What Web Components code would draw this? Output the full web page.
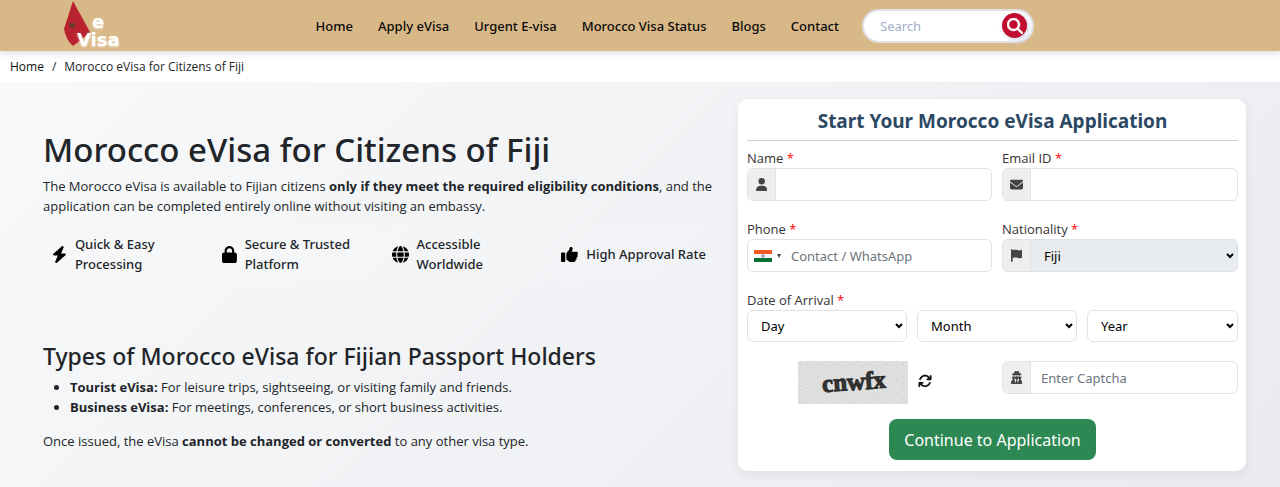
<!DOCTYPE html>
<html lang="en">
<head>
<meta charset="utf-8">
<title>Morocco eVisa for Citizens of Fiji</title>
<style>
  body { margin: 0; font: 13px/20px "Noto Sans", "Open Sans", sans-serif; color: #212529; background: #fff; }
</style>
</head>
<body>
<visa-header></visa-header>
<crumb-trail>Morocco eVisa for Citizens of Fiji</crumb-trail>
<visa-hero>
  <visa-intro></visa-intro>
  <apply-form slot="aside"></apply-form>
</visa-hero>

<script>
const define = (name, html, setup) => {
  const tpl = document.createElement('template');
  tpl.innerHTML = html;
  customElements.define(name, class extends HTMLElement {
    constructor() {
      super();
      this.attachShadow({ mode: 'open' }).append(tpl.content.cloneNode(true));
    }
    connectedCallback() { if (setup) setup(this, this.shadowRoot); }
  });
};

const ICONS = {
  search: ['0 0 512 512', '<path stroke="currentColor" stroke-width="14" d="M416 208c0 45.900-14.900 88.300-40 122.700L502.600 457.400c12.500 12.500 12.500 32.800 0 45.300s-32.800 12.500-45.300 0L330.700 376c-34.400 25.200-76.800 40-122.700 40C93.100 416 0 322.900 0 208S93.100 0 208 0S416 93.100 416 208zM208 352a144 144 0 1 0 0-288 144 144 0 1 0 0 288z"/>'],
  bolt: ['0 0 448 512', '<path d="M349.400 44.600c5.900-13.700 1.500-29.700-10.600-38.500s-28.600-8-39.900 1.800l-256 224c-10 8.800-13.600 22.900-8.900 35.300S50.700 288 64 288H175.500L98.600 467.400c-5.900 13.700-1.500 29.700 10.600 38.500s28.600 8 39.900-1.800l256-224c10-8.800 13.600-22.900 8.900-35.300s-16.600-20.700-30-20.700H272.500L349.400 44.600z"/>'],
  lock: ['0 0 448 512', '<path d="M144 144v48H304V144c0-44.200-35.800-80-80-80s-80 35.800-80 80zM80 192V144C80 64.500 144.500 0 224 0s144 64.500 144 144v48h16c35.300 0 64 28.700 64 64V448c0 35.300-28.700 64-64 64H64c-35.300 0-64-28.700-64-64V256c0-35.300 28.700-64 64-64H80z"/>'],
  globe: ['0 0 512 512', '<path d="M352 256c0 22.200-1.200 43.600-3.300 64H163.300c-2.200-20.400-3.300-41.800-3.300-64s1.200-43.600 3.300-64H348.700c2.200 20.400 3.300 41.800 3.300 64zm28.800-64H503.900c5.300 20.500 8.100 41.900 8.100 64s-2.800 43.500-8.100 64H380.800c2.100-20.600 3.200-42 3.200-64s-1.100-43.400-3.200-64zm112.600-32H376.700c-10-63.900-29.800-117.400-55.300-151.600c78.300 20.700 142 77.500 171.900 151.600zm-149.100 0H167.700c6.100-36.400 15.500-68.600 27-94.700c10.500-23.600 22.200-40.700 33.500-51.500C239.400 3.200 248.700 0 256 0s16.600 3.200 27.800 13.800c11.300 10.800 23 27.900 33.500 51.500c11.600 26 20.900 58.200 27 94.700zm-209 0H18.600C48.600 85.900 112.200 29.100 190.600 8.400C165.100 42.600 145.300 96.100 135.300 160zM8.100 192H131.200c-2.100 20.600-3.200 42-3.200 64s1.100 43.400 3.200 64H8.100C2.800 299.500 0 278.100 0 256s2.800-43.500 8.100-64zM194.700 446.600c-11.600-26-20.900-58.200-27-94.600H344.300c-6.100 36.400-15.500 68.600-27 94.600c-10.500 23.600-22.200 40.700-33.500 51.500C272.600 508.800 263.300 512 256 512s-16.600-3.200-27.800-13.800c-11.300-10.800-23-27.900-33.500-51.500zM135.300 352c10 63.900 29.800 117.400 55.300 151.600C112.200 482.900 48.600 426.100 18.600 352H135.300zm358.100 0c-30 74.100-93.600 130.900-171.900 151.600c25.500-34.200 45.200-87.700 55.300-151.600H493.400z"/>'],
  thumb: ['0 0 512 512', '<path d="M313.400 32.900c26 5.200 42.900 30.500 37.700 56.500l-2.300 11.400c-5.300 26.700-15.100 52.100-28.800 75.200H464c26.500 0 48 21.500 48 48c0 18.500-10.500 34.600-25.900 42.600C497 275.400 504 288.900 504 304c0 23.400-16.800 42.900-38.900 47.100c4.400 7.300 6.900 15.800 6.900 24.900c0 21.300-13.900 39.400-33.100 45.600c.7 3.300 1.100 6.800 1.100 10.400c0 26.500-21.500 48-48 48H294.500c-19 0-37.500-5.600-53.300-16.100l-38.500-25.700C176 420.400 160 390.400 160 358.300V247.100c0-29.200 13.300-56.700 36-75l7.400-5.900c26.500-21.200 44.600-51 51.200-84.200l2.300-11.400c5.200-26 30.500-42.900 56.500-37.700zM32 192H96c17.700 0 32 14.300 32 32V448c0 17.700-14.300 32-32 32H32c-17.700 0-32-14.300-32-32V224c0-17.700 14.300-32 32-32z"/>'],
  user: ['0 0 448 512', '<path d="M224 256A128 128 0 1 0 224 0a128 128 0 1 0 0 256zm-45.700 48C79.800 304 0 383.800 0 482.300C0 498.700 13.300 512 29.700 512H418.300c16.400 0 29.700-13.300 29.700-29.700C448 383.800 368.200 304 269.700 304H178.300z"/>'],
  mail: ['0 0 512 512', '<path d="M48 64C21.500 64 0 85.500 0 112c0 15.100 7.100 29.300 19.200 38.400L236.800 313.600c11.400 8.500 27 8.500 38.400 0L492.800 150.400c12.100-9.100 19.200-23.300 19.200-38.400c0-26.500-21.500-48-48-48H48zM0 176V384c0 35.300 28.700 64 64 64H448c35.300 0 64-28.700 64-64V176L294.400 339.200c-22.800 17.100-54 17.100-76.800 0L0 176z"/>'],
  flag: ['0 0 448 512', '<path d="M64 32C64 14.300 49.700 0 32 0S0 14.300 0 32V480c0 17.700 14.300 32 32 32s32-14.300 32-32V352l64.300-16.100c41.100-10.300 84.600-5.500 122.500 13.400c44.200 22.100 95.500 24.800 141.700 7.400l34.700-13c12.500-4.700 20.800-16.600 20.800-30V66.100c0-23-24.200-38-44.800-27.700l-9.600 4.800c-46.300 23.200-100.800 23.200-147.100 0c-35.100-17.600-75.400-22-113.500-12.500L64 48V32z"/>'],
  secret: ['0 0 448 512', '<path d="M224 16c-6.700 0-10.800-2.800-15.500-6.100C201.900 5.400 194 0 176 0c-30.500 0-52 43.700-66 89.400C62.700 98.100 32 112.200 32 128c0 14.300 25 27.100 64.600 35.900c-.4 4-.6 8-.6 12.100c0 17 3.300 33.200 9.300 48H45.400C38 224 32 230 32 237.400c0 1.700 .3 3.400 1 5l38.800 96.900C28.200 371.800 0 423.800 0 482.300C0 498.700 13.300 512 29.700 512H418.300c16.400 0 29.700-13.300 29.700-29.700c0-58.500-28.200-110.400-71.700-143L415 242.400c.6-1.600 1-3.300 1-5c0-7.400-6-13.400-13.400-13.400H342.700c6-14.800 9.300-31 9.300-48c0-4.100-.2-8.100-.6-12.100C391 155.100 416 142.300 416 128c0-15.800-30.700-29.900-78-38.600C324 43.700 302.500 0 272 0c-18 0-25.900 5.400-32.500 9.900c-4.800 3.300-8.800 6.100-15.500 6.100zm56 208H267.600c-16.500 0-31.100-10.600-36.300-26.200c-2.300-7-12.200-7-14.500 0c-5.200 15.600-19.900 26.200-36.300 26.200H168c-22.100 0-40-17.900-40-40V169.600c28.200 4.100 61 6.400 96 6.400s67.800-2.300 96-6.400V184c0 22.100-17.900 40-40 40zm-88 96l16 32L176 480 128 288l64 32zm128-32L272 480 240 352l16-32 64-32z"/>'],
  rotate: ['0 0 512 512', '<path d="M105.100 202.600c7.700-21.800 20.200-42.300 37.800-59.800c62.500-62.500 163.800-62.500 226.300 0L386.300 160H336c-17.700 0-32 14.300-32 32s14.300 32 32 32H463.500c17.700 0 32-14.300 32-32V64c0-17.700-14.300-32-32-32s-32 14.300-32 32v51.200L414.400 97.600c-87.500-87.500-229.300-87.500-316.800 0C73.200 122 55.600 150.700 44.800 181.400c-5.900 16.700 2.900 34.900 19.500 40.800s34.900-2.900 40.800-19.500zM39 289.300c-5 1.500-9.800 4.200-13.700 8.200c-4 4-6.700 8.800-8.100 14c-.9 3.200-1.200 6-1.200 8.500V448c0 17.700 14.300 32 32 32s32-14.300 32-32V396.900l17.600 17.500c87.500 87.400 229.300 87.400 316.700 0c24.400-24.400 42.100-53.100 52.900-83.700c5.900-16.700-2.900-34.900-19.500-40.800s-34.900 2.900-40.800 19.500c-7.700 21.800-20.200 42.300-37.800 59.800c-62.500 62.500-163.800 62.500-226.300 0L125.600 352H176c17.700 0 32-14.300 32-32s-14.300-32-32-32H48.400c-3.200 0-6.300 .4-9.400 1.300z"/>']
};

define('fa-icon', `
  <style>
    :host { display: inline-flex; flex: none; }
    svg { display: block; height: var(--icon-size, 16px); fill: currentColor; }
  </style>
  <svg aria-hidden="true"></svg>`, (el, root) => {
  const [box, body] = ICONS[el.getAttribute('name')];
  const svg = root.querySelector('svg');
  svg.setAttribute('viewBox', box);
  svg.innerHTML = body;
});

define('visa-logo', `
  <style>
    :host { display: block; width: 58px; height: 51px; }
    a, svg { display: block; }
    text { font: 700 18px "DejaVu Sans", sans-serif; fill: #fff; }
    .glow { filter: drop-shadow(0 1px 1px rgba(255,255,255,.7)); }
  </style>
  <a href="#" aria-label="eVisa home">
    <svg width="58" height="51" viewBox="0 0 58 51">
      <path d="M10 1 27 32 18 40 10 46Q3 40 1 29Z" fill="#b9232f"/>
      <path d="m9 22 1 2 3-1-2 3 1 3-3-2-3 1 1-3-1-2h3z" fill="#5e3b2c"/>
      <g class="glow"><text x="29" y="28">e</text><text x="14" y="46">Visa</text></g>
    </svg>
  </a>`);

define('nav-link', `
  <style>
    :host { display: block; }
    a { color: #0a0a0a; text-decoration: none; font-weight: 500; white-space: nowrap; }
  </style>
  <a href="#"><slot></slot></a>`);

define('search-box', `
  <style>
    :host { display: block; flex: none; }
    form { display: flex; align-items: center; box-sizing: border-box; width: 172px; height: 34px; padding: 0 5px 0 16px;
      border: 2px solid #dfe1e5; border-radius: 17px; background: #fff; }
    input { flex: 1; min-width: 0; padding: 0; border: 0; outline: 0; background: none; font: inherit; }
    input::placeholder { color: #a5aec6; opacity: 1; }
    button { display: grid; place-items: center; width: 25px; height: 25px; padding: 0; border: 0; border-radius: 50%;
      background: #c10d30; color: #fff; box-shadow: 2px 2px 6px #cdd3e2; --icon-size: 16px; }
  </style>
  <form><input type="text" placeholder="Search" aria-label="Search"><button type="button" aria-label="Search"><fa-icon name="search"></fa-icon></button></form>`);

define('visa-header', `
  <style>
    :host { display: block; position: relative; background: #d9b888; box-shadow: 0 2px 8px rgba(0,0,0,.15); }
    header { display: flex; align-items: center; height: 51px; padding: 0 246px 0 63px; }
    visa-logo { margin-right: auto; }
    nav { display: flex; gap: 25px; margin-right: 23px; }
  </style>
  <header>
    <visa-logo></visa-logo>
    <nav aria-label="Main">
      <nav-link>Home</nav-link><nav-link>Apply eVisa</nav-link><nav-link>Urgent E-visa</nav-link>
      <nav-link>Morocco Visa Status</nav-link><nav-link>Blogs</nav-link><nav-link>Contact</nav-link>
    </nav>
    <search-box></search-box>
  </header>`);

define('crumb-trail', `
  <style>
    :host { display: block; }
    nav { display: flex; gap: 8px; align-items: center; height: 31px; padding: 0 10px; font-size: 12px; font-family: "Open Sans", sans-serif; }
    a { color: #111; text-decoration: none; }
  </style>
  <nav aria-label="Breadcrumb"><a href="#">Home</a><span>/</span><span><slot></slot></span></nav>`);

define('visa-hero', `
  <style>
    :host { display: block; background: linear-gradient(135deg, #f8f9fa, #e9ebef); }
    main { display: grid; grid-template-columns: minmax(0, 679fr) minmax(0, 508fr); gap: 16px; align-items: start;
      padding: 17px 34px 16px 43px; }
  </style>
  <main><slot></slot><slot name="aside"></slot></main>`);

define('feature-item', `
  <style>
    :host { display: flex; align-items: center; gap: 8px; box-sizing: border-box; height: 60px; padding: 0 9px;
      border-radius: 10px; font-weight: 500; background: rgba(255,255,255,.1); --icon-size: 17px; }
    .icon { display: flex; color: #000; }
  </style>
  <span class="icon"></span><span><slot></slot></span>`, (el, root) => {
  const icon = document.createElement('fa-icon');
  icon.setAttribute('name', el.getAttribute('icon'));
  root.querySelector('.icon').replaceChildren(icon);
});

define('visa-intro', `
  <style>
    :host { display: block; padding-top: 29px; }
    h1, h2, p, ul { margin: 0; }
    p, ul { font-family: "Open Sans", sans-serif; }
    h1 { font-weight: 500; font-size: 33px; line-height: 44px; }
    h2 { margin-top: 57px; font-weight: 500; font-size: 23px; line-height: 30px; }
    h1 + p { margin-top: 4px; }
    .features { display: grid; grid-template-columns: repeat(4, 1fr); margin-top: 8px; }
    ul { margin-top: 6px; padding-left: 27px; }
    ul + p { margin-top: 14px; }
  </style>
  <h1>Morocco eVisa for Citizens of Fiji</h1>
  <p>The Morocco eVisa is available to Fijian citizens <b>only if they meet the required eligibility conditions</b>, and the application can be completed entirely online without visiting an embassy.</p>
  <div class="features">
    <feature-item icon="bolt">Quick &amp; Easy<br>Processing</feature-item>
    <feature-item icon="lock">Secure &amp; Trusted<br>Platform</feature-item>
    <feature-item icon="globe">Accessible<br>Worldwide</feature-item>
    <feature-item icon="thumb">High Approval Rate</feature-item>
  </div>
  <h2>Types of Morocco eVisa for Fijian Passport Holders</h2>
  <ul>
    <li><b>Tourist eVisa:</b> For leisure trips, sightseeing, or visiting family and friends.</li>
    <li><b>Business eVisa:</b> For meetings, conferences, or short business activities.</li>
  </ul>
  <p>Once issued, the eVisa <b>cannot be changed or converted</b> to any other visa type.</p>`);

define('captcha-code', `
  <style>
    :host { display: block; width: 110px; height: 43px; }
    svg { display: block; }
    text { font: 700 25px "Liberation Serif", serif; fill: #333; stroke: #2a2a2a; stroke-width: 1; }
  </style>
  <svg width="110" height="43" viewBox="0 0 110 43" role="img" aria-label="Captcha">
    <defs>
      <pattern id="hatch" width="4" height="4" patternUnits="userSpaceOnUse">
        <rect width="4" height="4" fill="#dcdcdc"/><path d="M0 0 4 4M-1 3 1 5M3-1 5 1" stroke="#e6e6e6"/>
      </pattern>
      <pattern id="specks" width="17" height="13" patternUnits="userSpaceOnUse">
        <path d="M2 3h2M9 1h1M13 6h2M6 9h1M1 11h1M11 11h2" stroke="#d0d0d0"/>
      </pattern>
    </defs>
    <rect width="110" height="43" fill="url(#hatch)"/><rect width="110" height="43" fill="url(#specks)"/>
    <text y="29" x="24" transform="rotate(-4 55 22)">cnwfx</text>
  </svg>`);

define('india-flag', `
  <style>:host { display: block; } svg { display: block; }</style>
  <svg width="18" height="12" viewBox="0 0 18 12" aria-hidden="true">
    <path d="M0 0h18v4H0z" fill="#f05a22"/><path d="M0 4h18v4H0z" fill="#f5f5f8"/><path d="M0 8h18v4H0z" fill="#0b7130"/>
    <circle cx="9" cy="6" r="1.500" fill="#b7b7dc" stroke="#7c7cb8" stroke-width=".6"/>
  </svg>`);

define('apply-form', `
  <style>
    :host { display: block; box-sizing: border-box; padding: 8px 8px 11px 9px; border-radius: 10px; background: #fff;
      box-shadow: 0 4px 12px rgba(0,0,0,.06); }
    h2 { margin: 0 0 8px; padding-bottom: 4px; border-bottom: 1px solid #c8d1da; font-weight: 700; font-size: 19px; line-height: 29px;
      color: #2c4964; text-align: center; }
    form, .dates { display: grid; column-gap: 10px; }
    form { grid-template-columns: minmax(0, 245fr) minmax(0, 236fr); row-gap: 19px; }
    .wide { grid-column: 1 / -1; }
    .dates { grid-template-columns: minmax(0, 160fr) minmax(0, 160fr) minmax(0, 151fr); }
    label { display: block; line-height: 19px; color: #333; font-family: "Open Sans", sans-serif; }
    label i { color: #f00; font-style: normal; }
    .group { display: flex; box-sizing: border-box; height: 33px; border: 1px solid #dee2e6; border-radius: 6px; overflow: hidden; background: #fff; }
    .icon { display: grid; place-items: center; box-sizing: border-box; width: 28px; flex: none; border-right: 1px solid #dee2e6;
      background: #eee; color: #444; --icon-size: 13px; }
    input, select { flex: 1; min-width: 0; box-sizing: border-box; border: 0; margin: 0; font: inherit; color: #212529; background: none; outline: 0; }
    input { padding: 0 10px; }
    input::placeholder { color: #6c757d; opacity: 1; }
    select { appearance: none; padding: 0 16px 0 13px; color: #000;
      background: url("data:image/svg+xml,%3Csvg xmlns='http://www.w3.org/2000/svg' width='8' height='6' viewBox='0 0 8 6'%3E%3Cpath d='M1 1l3 3 3-3' fill='none' stroke='black' stroke-width='2'/%3E%3C/svg%3E") no-repeat right 3px center; }
    .grey { background: #e9ecef; }
    .dates select { height: 32px; border: 1px solid #dee2e6; border-radius: 6px; background-color: #fff; }
    .dial { display: flex; align-items: center; gap: 5px; flex: none; padding: 0 0 0 6px; border: 0; background: none; }
    .dial::after { content: ""; border: solid transparent; border-width: 4px 2px 0; border-top-color: #444; }
    .captcha { display: flex; align-items: center; justify-content: flex-end; gap: 10px; padding-right: 60px; }
    .captcha button { display: block; padding: 0; border: 0; background: none; color: #111; --icon-size: 14px; }
    .send { justify-self: center; height: 41px; margin-top: -4px; padding: 0 15px; border: 0; border-radius: 8px; background: #2e8854;
      color: #fff; font: 16px "Noto Sans", sans-serif; }
  </style>
  <h2>Start Your Morocco eVisa Application</h2>
  <form>
    <div><label for="name">Name <i>*</i></label>
      <div class="group"><span class="icon"><fa-icon name="user"></fa-icon></span><input id="name" type="text"></div></div>
    <div><label for="email">Email ID <i>*</i></label>
      <div class="group"><span class="icon"><fa-icon name="mail"></fa-icon></span><input id="email" type="email"></div></div>
    <div><label for="phone">Phone <i>*</i></label>
      <div class="group"><button class="dial" type="button" aria-label="Country code"><india-flag></india-flag></button><input id="phone" type="tel" placeholder="Contact / WhatsApp"></div></div>
    <div><label for="nation">Nationality <i>*</i></label>
      <div class="group grey"><span class="icon"><fa-icon name="flag"></fa-icon></span><select id="nation"><option>Fiji</option></select></div></div>
    <div class="wide"><label for="day">Date of Arrival <i>*</i></label>
      <div class="dates"><select id="day"><option>Day</option></select><select aria-label="Month"><option>Month</option></select><select aria-label="Year"><option>Year</option></select></div></div>
    <div class="captcha"><captcha-code></captcha-code><button type="button" aria-label="New captcha"><fa-icon name="rotate"></fa-icon></button></div>
    <div class="group"><span class="icon"><fa-icon name="secret"></fa-icon></span><input type="text" placeholder="Enter Captcha" aria-label="Enter Captcha"></div>
    <button class="send wide" type="button">Continue to Application</button>
  </form>`);
</script>
</body>
</html>
